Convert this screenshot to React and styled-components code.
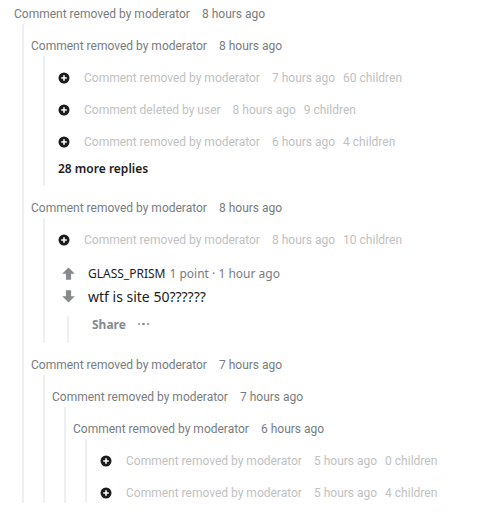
import React from "react";
import styled, { createGlobalStyle } from "styled-components";

const Global = createGlobalStyle`
  html, body { margin: 0; padding: 0; background: #ffffff; }
  body { font-family: "Noto Sans", "Open Sans", sans-serif; font-size: 12px; color: #1c1c1c; }
`;

const Page = styled.div`
  padding: 4px 0 0 14px;
  width: 504px;
  height: 516px;
  box-sizing: border-box;
  overflow: hidden;
`;

const Header = styled.div`
  height: 20px;
  display: flex;
  align-items: center;
  gap: 12px;
  color: #787c7e;
  font-family: Roboto, "Noto Sans", sans-serif;
  font-size: 12px;
  white-space: nowrap;
`;

const Children = styled.div`
  margin-left: ${(p) => p.$offset}px;
  border-left: 2px solid #edeff1;
  padding: 12px 0 0 7px;
  display: flex;
  flex-direction: column;
  gap: 12px;
`;

const Stack = styled.div`
  display: flex;
  flex-direction: column;
`;

const CollapsedRow = styled.div`
  height: 20px;
  display: flex;
  align-items: center;
  padding-left: 6px;
  color: #c0c1c2;
  font-family: Roboto, "Noto Sans", sans-serif;
  font-size: 12px;
  white-space: nowrap;
`;

const IconBox = styled.span`
  width: 12px;
  height: 12px;
  margin-right: 14px;
  display: flex;
  align-items: center;
  justify-content: center;
`;

const Who = styled.span`
  margin-right: 12px;
`;

const Time = styled.span`
  margin-right: 8px;
`;

const MoreReplies = styled.div`
  margin-top: -6px;
  padding: 0 0 8px 6px;
  height: 20px;
  display: flex;
  align-items: center;
  font-weight: 600;
  font-size: 12px;
  color: #1c1c1c;
`;

const Full = styled.div`
  display: flex;
  padding-left: 6px;
`;

const VoteCol = styled.div`
  width: 20px;
  display: flex;
  flex-direction: column;
  align-items: center;
`;

const ArrowBox = styled.div`
  height: ${(p) => p.$h}px;
  display: flex;
  align-items: center;
  justify-content: center;
`;

const ThreadLine = styled.div`
  width: 2px;
  flex: 1;
  margin-top: 8px;
  background: #edeff1;
`;

const Body = styled.div`
  margin-left: 10px;
  display: flex;
  flex-direction: column;
`;

const Meta = styled.div`
  height: 22px;
  display: flex;
  align-items: center;
  gap: 4px;
  color: #787c7e;
  font-size: 12px;
`;

const Author = styled.span`
  color: #1c1c1c;
`;

const Text = styled.div`
  height: 24px;
  display: flex;
  align-items: center;
  font-size: 14px;
  color: #1c1c1c;
`;

const Actions = styled.div`
  margin-top: 4px;
  height: 24px;
  padding-bottom: 7px;
  display: flex;
  align-items: center;
  gap: 12px;
`;

const ActionBtn = styled.span`
  padding-left: 4px;
  font-weight: 700;
  font-size: 12px;
  color: #878a8c;
`;

const Dots = styled.span`
  display: flex;
  gap: 2px;
`;

const Dot = styled.span`
  width: 2.5px;
  height: 2.5px;
  border-radius: 50%;
  background: #878a8c;
`;

const PlusCircle = () => (
  <svg width="12" height="12" viewBox="0 0 12 12">
    <circle cx="6" cy="6" r="5.5" fill="#1c1c1c" />
    <path d="M6 3.2v5.6M3.2 6h5.6" stroke="#fff" strokeWidth="1.6" />
  </svg>
);

const Arrow = ({ down }) => (
  <svg width="13" height="13" viewBox="0 0 12 12" style={down ? { transform: "rotate(180deg)" } : undefined}>
    <path d="M6 0.5 L11.8 6.3 H8.4 V11.8 H3.6 V6.3 H0.2 Z" fill="#878a8c" />
  </svg>
);

const Collapsed = ({ who, time, kids }) => (
  <CollapsedRow>
    <IconBox>
      <PlusCircle />
    </IconBox>
    <Who>{who}</Who>
    <Time>{time}</Time>
    <span>{kids} children</span>
  </CollapsedRow>
);

const Comment = ({ time, offset = 12, children }) => (
  <Stack>
    <Header>
      <span>Comment removed by moderator</span>
      <span>{time}</span>
    </Header>
    {children && <Children $offset={offset}>{children}</Children>}
  </Stack>
);

export default function App() {
  return (
    <>
      <Global />
      <Page>
        <Comment time="8 hours ago" offset={8}>
          <Comment time="8 hours ago">
            <Collapsed who="Comment removed by moderator" time="7 hours ago" kids={60} />
            <Collapsed who="Comment deleted by user" time="8 hours ago" kids={9} />
            <Collapsed who="Comment removed by moderator" time="6 hours ago" kids={4} />
            <MoreReplies>28 more replies</MoreReplies>
          </Comment>
          <Comment time="8 hours ago">
            <Collapsed who="Comment removed by moderator" time="8 hours ago" kids={10} />
            <Full>
              <VoteCol>
                <ArrowBox $h={22}>
                  <Arrow />
                </ArrowBox>
                <ArrowBox $h={24}>
                  <Arrow down />
                </ArrowBox>
                <ThreadLine />
              </VoteCol>
              <Body>
                <Meta>
                  <Author>GLASS_PRISM</Author>
                  <span>1 point · 1 hour ago</span>
                </Meta>
                <Text>wtf is site 50??????</Text>
                <Actions>
                  <ActionBtn>Share</ActionBtn>
                  <Dots>
                    <Dot />
                    <Dot />
                    <Dot />
                  </Dots>
                </Actions>
              </Body>
            </Full>
          </Comment>
          <Comment time="7 hours ago">
            <Comment time="7 hours ago">
              <Comment time="6 hours ago">
                <Collapsed who="Comment removed by moderator" time="5 hours ago" kids={0} />
                <Collapsed who="Comment removed by moderator" time="5 hours ago" kids={4} />
              </Comment>
            </Comment>
          </Comment>
        </Comment>
      </Page>
    </>
  );
}
